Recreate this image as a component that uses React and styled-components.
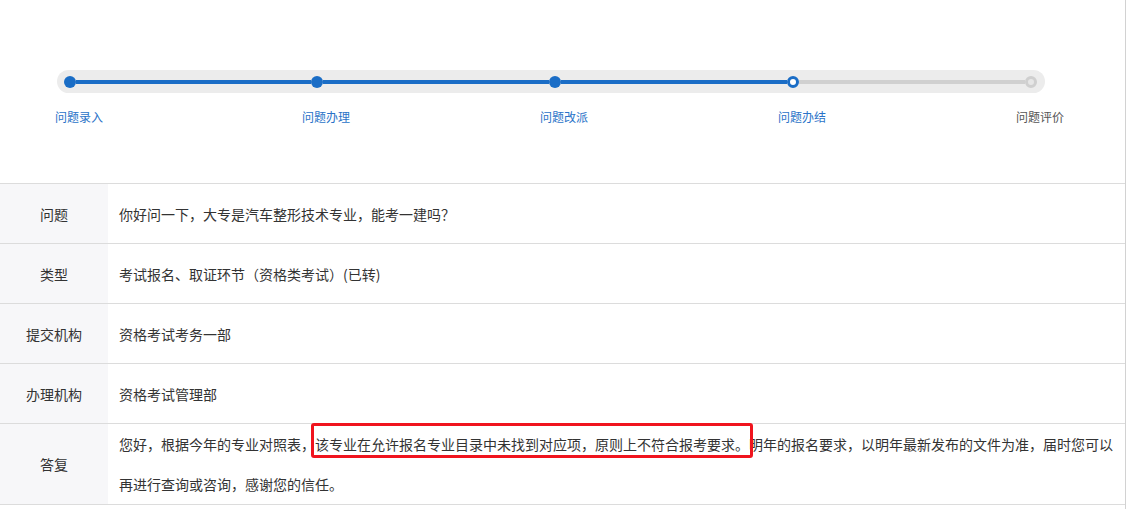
import React from "react";
import styled, { createGlobalStyle } from "styled-components";

const GlobalStyle = createGlobalStyle`
  body {
    margin: 0;
    background: #fff;
    font-family: "Noto Sans CJK SC", "Noto Sans", sans-serif;
    color: #333;
  }
`;

const Page = styled.div`
  width: 1125px;
  border-right: 1px solid #d2d2d2;
  min-height: 509px;
`;

const Header = styled.section`
  height: 183px;
  padding-top: 70px;
  box-sizing: border-box;
`;

const Track = styled.div`
  margin-left: 57px;
  width: 988px;
  height: 23px;
  border-radius: 12px;
  background: #ececec;
  display: flex;
  align-items: center;
  padding-left: 7px;
  box-sizing: border-box;
`;

const Dot = styled.span`
  flex: none;
  width: 12px;
  height: 12px;
  border-radius: 50%;
  box-sizing: border-box;
  background: ${(p) =>
    p.state === "done" ? "#1a6dc6" : p.state === "current" ? "#fff" : "#e6e6e6"};
  border: ${(p) =>
    p.state === "done"
      ? "none"
      : p.state === "current"
      ? "3px solid #1a6dc6"
      : "3px solid #cfcfcf"};
`;

const Line = styled.span`
  flex: none;
  height: 4px;
  width: ${(p) => p.w}px;
  background: ${(p) => (p.active ? "#1a6dc6" : "#d0d0d0")};
`;

const Labels = styled.div`
  display: flex;
  margin: 16px 0 0 55px;
`;

const Label = styled.div`
  flex: none;
  width: ${(p) => (p.w ? `${p.w}px` : "auto")};
  font-size: 12px;
  line-height: 16px;
  color: ${(p) => (p.active ? "#2a73c8" : "#555")};
`;

const Table = styled.div`
  border-top: 1px solid #dcdcdc;
`;

const Row = styled.div`
  display: flex;
  border-bottom: 1px solid #dcdcdc;
  min-height: 59px;
`;

const Key = styled.div`
  flex: none;
  width: 108px;
  background: #f7f7f9;
  display: flex;
  align-items: center;
  justify-content: center;
  font-size: 14px;
  color: #333;
`;

const Value = styled.div`
  flex: 1;
  display: flex;
  align-items: center;
  padding: 0 11px;
  font-size: 14px;
  color: #333;
  line-height: ${(p) => (p.multi ? "40px" : "20px")};
`;

// red annotation frame drawn over the sentence
const Mark = styled.span`
  position: relative;

  &::after {
    content: "";
    position: absolute;
    left: -4px;
    right: -4px;
    top: -11px;
    bottom: -4px;
    border: 3px solid #f0141e;
    border-radius: 3px;
    pointer-events: none;
  }
`;

const steps = [
  { name: "问题录入", state: "done" },
  { name: "问题办理", state: "done" },
  { name: "问题改派", state: "done" },
  { name: "问题办结", state: "current" },
  { name: "问题评价", state: "todo" },
];
const gaps = [247, 238, 238, 238];

export default function App() {
  return (
    <Page>
      <GlobalStyle />
      <Header>
        <Track>
          {steps.map((s, i) => (
            <React.Fragment key={s.name}>
              <Dot state={s.state} />
              {i < gaps.length && (
                <Line w={gaps[i] - 12} active={steps[i + 1].state !== "todo"} />
              )}
            </React.Fragment>
          ))}
        </Track>
        <Labels>
          {steps.map((s, i) => (
            <Label key={s.name} w={gaps[i]} active={s.state !== "todo"}>
              {s.name}
            </Label>
          ))}
        </Labels>
      </Header>
      <Table>
        <Row>
          <Key>问题</Key>
          <Value>你好问一下，大专是汽车整形技术专业，能考一建吗？</Value>
        </Row>
        <Row>
          <Key>类型</Key>
          <Value>考试报名、取证环节（资格类考试）(已转)</Value>
        </Row>
        <Row>
          <Key>提交机构</Key>
          <Value>资格考试考务一部</Value>
        </Row>
        <Row>
          <Key>办理机构</Key>
          <Value>资格考试管理部</Value>
        </Row>
        <Row>
          <Key>答复</Key>
          <Value multi>
            <div>
              您好，根据今年的专业对照表，
              <Mark>该专业在允许报名专业目录中未找到对应项，原则上不符合报考要求。</Mark>
              明年的报名要求，以明年最新发布的文件为准，届时您可以再进行查询或咨询，感谢您的信任。
            </div>
          </Value>
        </Row>
      </Table>
    </Page>
  );
}
